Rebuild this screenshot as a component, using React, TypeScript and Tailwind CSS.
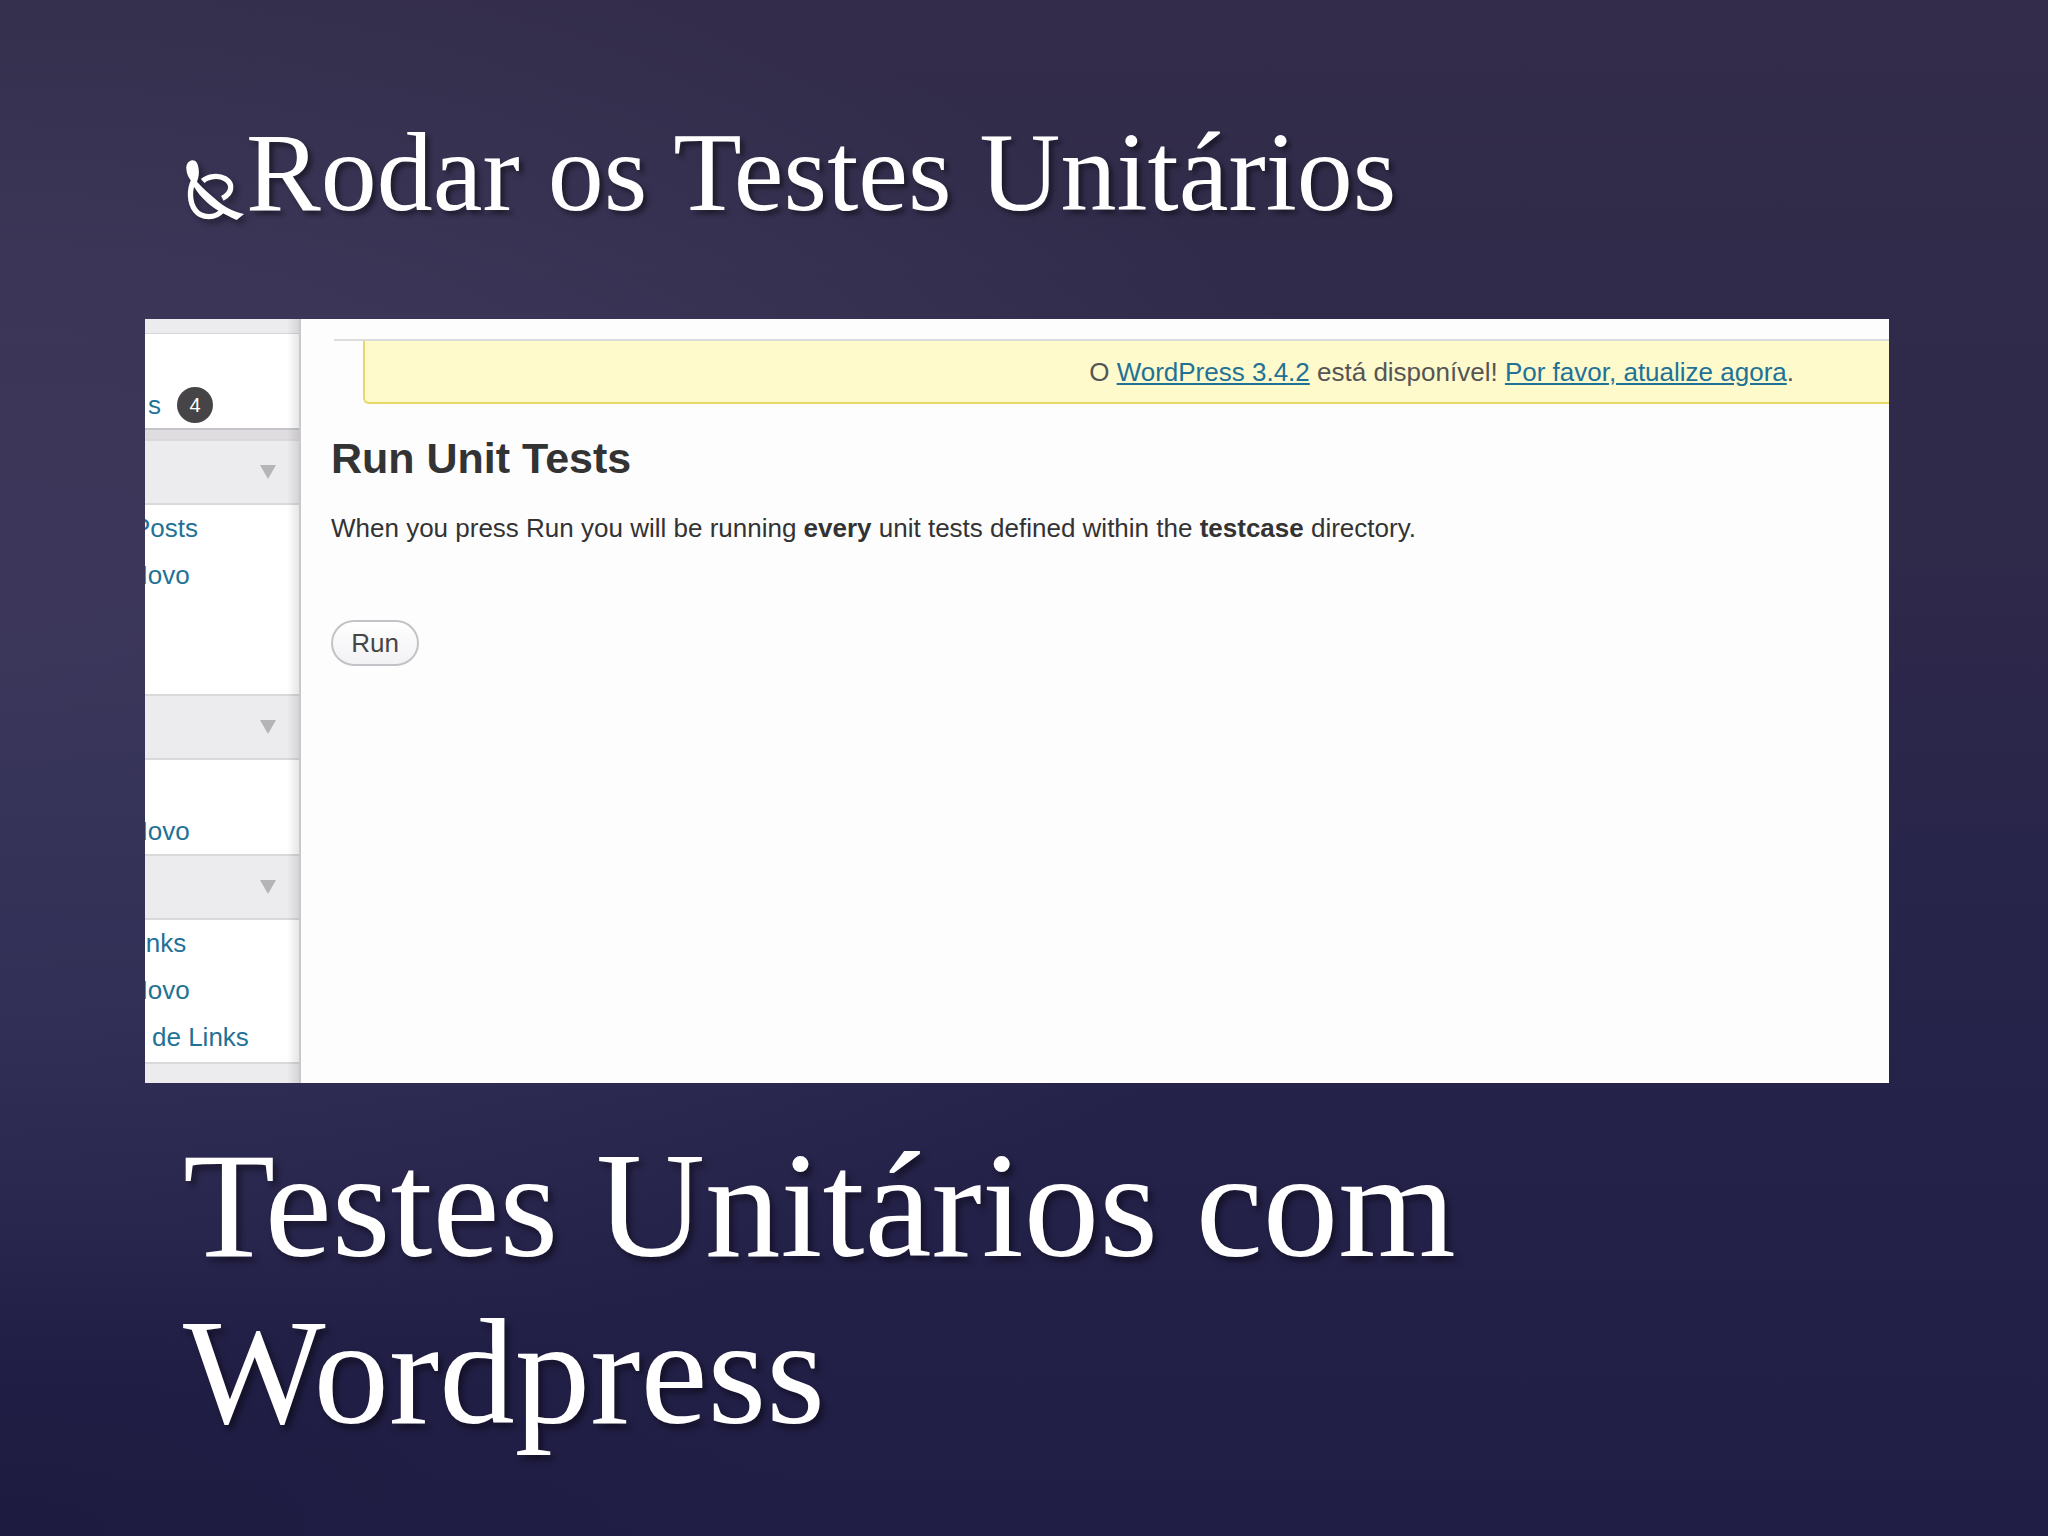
import React from 'react';

const SERIF = "font-['Palatino_Linotype','Liberation_Serif',serif]";

type Section = {
  id: string;
  items: string[];
  className: string;
};

const sections: Section[] = [
  { id: 'posts', items: ['Posts', 'Novo'], className: 'h-[189px]' },
  { id: 'media', items: ['Novo'], className: 'h-[94px] pt-[48px]' },
  { id: 'links', items: ['inks', 'Novo', 'de Links'], className: 'h-[142px]' },
];

// how far each label runs out of the clipped left edge
const shift: Record<string, string> = {
  Posts: '-ml-[12px]',
  Novo: '-ml-[16px]',
  inks: '-ml-[5px]',
  'de Links': 'ml-[7px]',
};

const Ornament: React.FC = () => (
  <svg viewBox="18 12 180 189" className="h-[63px] w-[60px]" fill="none" stroke="white" aria-hidden="true">
    <path d="M37 16C25 17 18 29 19 42C20 57 26 68 34 79L41 94C50 110 64 127 82 143C102 161 134 178 170 195L192 177C160 170 130 155 106 132C84 113 66 97 51 80C56 67 58 55 56 42C54 25 47 15 37 16Z" fill="white" stroke="none" />
    <path d="M41 76C27 104 28 142 46 166C64 190 106 192 127 166" strokeWidth="16" />
    <path d="M68 78C84 63 116 60 135 71C160 86 158 114 127 130" strokeWidth="16" />
  </svg>
);

const SideHeader: React.FC = () => (
  <button type="button" aria-label="Expandir" className="flex h-[66px] w-full items-center justify-end border-y-2 border-[#d9d8da] bg-[#ecebed] pr-[23px]">
    <svg viewBox="0 0 16 14" className="h-[14px] w-[16px]" aria-hidden="true">
      <path d="M0 0H16L8 14Z" fill="#b5b4b6" />
    </svg>
  </button>
);

const Sidebar: React.FC = () => (
  <aside className="relative w-[156px] shrink-0 overflow-hidden border-r-2 border-[#cac8cc] bg-white text-[26px] leading-[46px] text-[#1f7296]">
    <div className="h-[15px] border-b border-[#d6d5d7] bg-[#ecebed]" />
    <div className="flex h-[94px] items-end gap-[16px] pb-[5px] pl-[3px]">
      <a href="#" className="leading-[36px]">s</a>
      <span className="flex size-[36px] items-center justify-center rounded-full bg-[#464446] text-[20px] text-white">4</span>
    </div>
    <div className="h-[11px] border-t-2 border-[#c6c4c8] bg-[#dfdde0]" />
    {sections.map((section) => (
      <div key={section.id}>
        <SideHeader />
        <ul className={section.className}>
          {section.items.map((item) => (
            <li key={item} className="h-[47px] whitespace-nowrap">
              <a href="#" className={`inline-block ${shift[item]}`}>{item}</a>
            </li>
          ))}
        </ul>
      </div>
    ))}
    <div className="h-[21px] border-t-2 border-[#d9d8da] bg-[#ecebed]" />
    <div className="pointer-events-none absolute inset-y-0 right-0 w-[12px] bg-linear-to-r from-transparent to-black/10" />
  </aside>
);

const Content: React.FC = () => (
  <section className="min-w-0 flex-1 bg-[#fdfdfe] pt-[20px] pl-[30px] text-[26px] text-[#333]">
    <div className="ml-[3px] border-t-2 border-[#dcdbde] pl-[29px]">
      <p className="h-[63px] rounded-bl-[6px] border-b-2 border-l-2 border-[#e9d767] bg-[#fefacb] pr-[95px] text-right leading-[62px] whitespace-nowrap text-[#555]">
        O <a href="#" className="text-[#1f7296] underline">WordPress 3.4.2</a> está disponível!{' '}
        <a href="#" className="text-[#1f7296] underline">Por favor, atualize agora</a>.
      </p>
    </div>
    <h2 className="mt-[28px] text-[43px] leading-[52px] font-bold">Run Unit Tests</h2>
    <p className="mt-[26px] leading-[36px]">
      When you press Run you will be running <strong>every</strong> unit tests defined within the{' '}
      <strong>testcase</strong> directory.
    </p>
    <button type="button" className="mt-[74px] h-[46px] w-[88px] rounded-full border-2 border-[#c4c2c6] bg-linear-to-b from-white to-[#f2f1f4] text-[26px] leading-[40px] text-[#464646]">
      Run
    </button>
  </section>
);

export default function App() {
  return (
    <main className="min-h-screen bg-[radial-gradient(ellipse_40%_20%_at_0%_100%,rgba(28,27,62,0.8)_0%,transparent_100%),radial-gradient(ellipse_70%_48%_at_0%_42%,rgba(110,108,150,0.22)_0%,rgba(110,108,150,0.17)_50%,transparent_100%),linear-gradient(to_bottom,#332d4b_0%,#2f294a_36%,#28254a_56%,#242149_80%,#211e46_100%)] pt-[104px] pr-[159px] pl-[145px]">
      <div className={`flex items-start pl-[41px] text-white ${SERIF} text-[112px] leading-[136px] [text-shadow:4px_4px_5px_rgba(0,0,0,0.45)]`}>
        <span className="mt-[55px] drop-shadow-[4px_4px_3px_rgba(0,0,0,0.4)]">
          <Ornament />
        </span>
        <p>Rodar os Testes Unitários</p>
      </div>
      <div className="mt-[79px] flex min-h-[764px] bg-white font-['Liberation_Sans',sans-serif]">
        <Sidebar />
        <Content />
      </div>
      <h1 className={`mt-[39px] max-w-[1500px] pl-[38px] text-white ${SERIF} text-[151px] leading-[167px] [text-shadow:4px_5px_6px_rgba(0,0,0,0.45)]`}>
        Testes Unitários com Wordpress
      </h1>
    </main>
  );
}
